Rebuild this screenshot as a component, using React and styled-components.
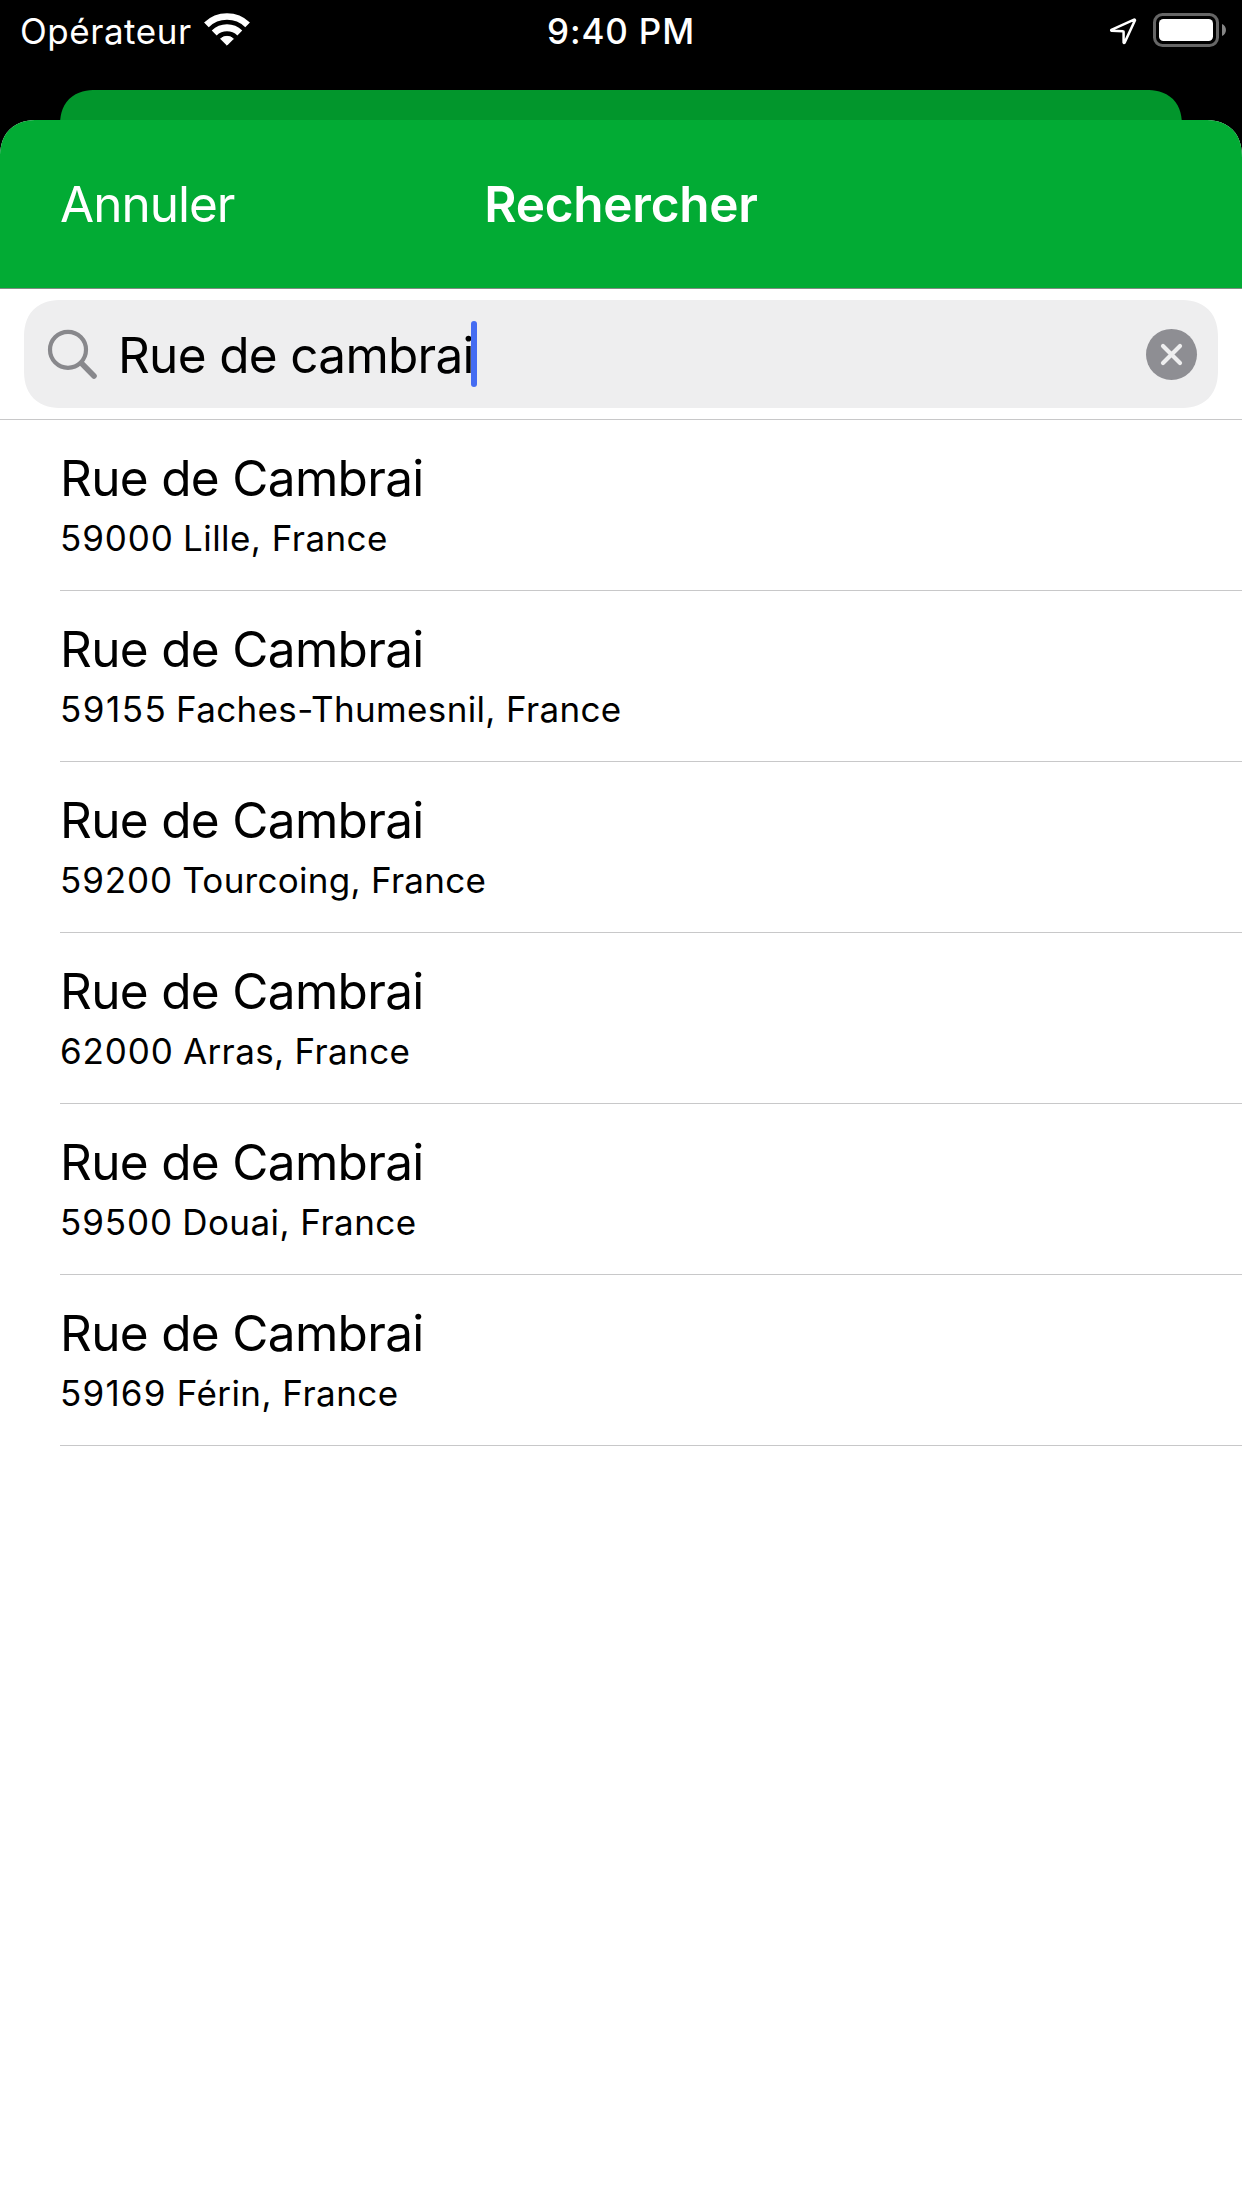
import React from "react";
import styled, { createGlobalStyle } from "styled-components";

const GlobalStyle = createGlobalStyle`
  * { box-sizing: border-box; }
  body {
    margin: 0;
    background: #000;
    color: #000;
    font-family: Inter, "Liberation Sans", sans-serif;
    -webkit-font-smoothing: antialiased;
  }
  button { all: unset; cursor: pointer; }
`;

const Screen = styled.div`
  display: flex;
  flex-direction: column;
  width: 1242px;
  height: 2208px;
  overflow: hidden;
  background: #000;
`;

const StatusBar = styled.header`
  display: grid;
  grid-template-columns: 1fr auto 1fr;
  align-items: center;
  height: 60px;
  margin-bottom: 30px;
  padding: 0 15px;
  color: #fff;
  flex: none;
`;

const StatusGroup = styled.div`
  display: flex;
  align-items: center;
  justify-content: ${(p) => (p.$end ? "flex-end" : "flex-start")};
  gap: ${(p) => p.$gap}px;
`;

const Carrier = styled.span`
  padding: 2px 0 0 5px;
  font-size: 35px;
  line-height: 42px;
  letter-spacing: 0.53px;
`;

const Clock = styled.time`
  padding-top: 2px;
  font-size: 35px;
  line-height: 42px;
  font-weight: 550;
  letter-spacing: 0.85px;
`;

const BackCard = styled.div`
  flex: none;
  height: 68px;
  margin: 0 60px -38px;
  border-radius: 36px 36px 0 0;
  corner-shape: superellipse(1.25);
  background: #02962c;
`;

const Sheet = styled.main`
  display: flex;
  flex-direction: column;
  flex: 1;
  overflow: hidden;
  border-radius: 38px 38px 0 0;
  corner-shape: superellipse(1.25);
  background: #fff;
  z-index: 1;
`;

const NavBar = styled.nav`
  display: grid;
  grid-template-columns: 1fr auto 1fr;
  align-items: center;
  flex: none;
  height: 169px;
  padding: 0 60px;
  border-bottom: 1px solid #7f8c82;
  background: #02ab34;
  color: #fff;
  font-size: 49.5px;
  line-height: 60px;
`;

const CancelButton = styled.button`
  letter-spacing: -1px;
`;

const NavTitle = styled.h1`
  margin: 0;
  font: inherit;
  font-weight: 600;
  letter-spacing: -0.25px;
`;

const SearchBar = styled.div`
  flex: none;
  padding: 11px 24px;
  border-bottom: 1px solid #c8c8c9;
`;

const SearchField = styled.div`
  display: flex;
  align-items: center;
  height: 108px;
  padding: 0 20px 0 22px;
  border-radius: 38px;
  corner-shape: superellipse(1.25);
  background: #eeeeef;
`;

const Query = styled.span`
  margin-left: 18px;
  padding-top: 2px;
  font-size: 49.5px;
  line-height: 60px;
  letter-spacing: -0.75px;
  word-spacing: 0.3px;
`;

const Caret = styled.span`
  width: 6px;
  height: 66px;
  margin-left: -2.7px;
  border-radius: 3px;
  background: #446cf2;
`;

const ClearButton = styled.button`
  display: flex;
  margin-left: auto;
`;

const Results = styled.ul`
  margin: 0;
  padding: 0 0 0 60px;
  list-style: none;
`;

const Result = styled.li`
  display: flex;
  flex-direction: column;
  gap: 9px;
  height: 171px;
  padding-top: 28px;
  border-bottom: 1px solid #c8c8c9;
`;

const Street = styled.span`
  font-size: 49.5px;
  line-height: 60px;
  letter-spacing: -0.67px;
`;

const Locality = styled.span`
  font-size: 35px;
  line-height: 42px;
  letter-spacing: ${(p) => p.$tracking}px;
  white-space: pre;
`;

const PostalCode = styled.span`
  letter-spacing: ${(p) => p.$tracking}px;
  word-spacing: ${(p) => p.$space}px;
`;

const Icon = styled.svg`
  display: block;
  flex: none;
`;

const WifiIcon = () => (
  <Icon width="46" height="34" viewBox="204 13 46 34" fill="none" stroke="#fff">
    <path d="M206.4 24.8A29.7 29.7 0 0 1 247.6 24.8" strokeWidth="6.7" />
    <path d="M214.2 32.9A18.4 18.4 0 0 1 239.8 32.9" strokeWidth="7" />
    <path
      d="M220.6 38.8A9.6 9.6 0 0 1 233.4 38.8L227 45.2Z"
      fill="#fff"
      strokeWidth="1"
      strokeLinejoin="round"
    />
  </Icon>
);

const LocationIcon = () => (
  <Icon width="28" height="34" viewBox="1109 13 28 34" fill="none" stroke="#fff">
    <path
      d="M1134.1 19.6L1111.4 29.9Q1110.8 30.5 1111.7 30.8L1123 31.2Q1123.6 31.2 1123.6 31.8L1123.6 42.4Q1123.9 43.4 1124.6 42.6L1135 20.3Q1135 19.3 1134.1 19.6Z"
      strokeWidth="2.5"
      strokeLinejoin="round"
    />
  </Icon>
);

const BatteryIcon = () => (
  <Icon width="74" height="34" viewBox="1153 13 74 34" fill="none">
    <rect x="1154.5" y="14.5" width="63" height="31" rx="8" stroke="#666" strokeWidth="3" />
    <rect x="1159" y="19" width="54" height="22" rx="4.5" fill="#fff" />
    <path d="M1222 24C1227.3 26 1227.3 34 1222 36Z" fill="#858585" />
  </Icon>
);

const SearchIcon = () => (
  <Icon width="54" height="54" viewBox="46 327 54 54" fill="none" stroke="#88888c">
    <circle cx="68" cy="349.8" r="18" strokeWidth="4.2" />
    <path d="M81.5 363.3L94 376" strokeWidth="5.6" strokeLinecap="round" />
  </Icon>
);

const ClearIcon = () => (
  <Icon width="52" height="52" viewBox="0 0 52 52" fill="none">
    <circle cx="25.5" cy="26.4" r="25.5" fill="#8e8e93" />
    <path
      d="M17 17.9L34 34.9M34 17.9L17 34.9"
      stroke="#eeeeef"
      strokeWidth="4.2"
      strokeLinecap="round"
    />
  </Icon>
);

const results = [
  { code: "59000", place: "Lille, France", codeTracking: 0.9, space: -1.5, tracking: 0.45 },
  { code: "59155", place: "Faches-Thumesnil, France", codeTracking: 1.5, space: -2.6, tracking: 0.35 },
  { code: "59200", place: "Tourcoing, France", codeTracking: 0.9, space: -1.5, tracking: 0.28 },
  { code: "62000", place: "Arras, France", codeTracking: 0.9, space: -1.5, tracking: 0.35 },
  { code: "59500", place: "Douai, France", codeTracking: 0.9, space: -1.5, tracking: 0.45 },
  { code: "59169", place: "Férin, France", codeTracking: 1.2, space: -1, tracking: 0.45 },
];

export default function App() {
  return (
    <>
      <GlobalStyle />
      <Screen>
        <StatusBar>
          <StatusGroup $gap={12.4}>
            <Carrier>Opérateur</Carrier>
            <WifiIcon />
          </StatusGroup>
          <Clock>9:40 PM</Clock>
          <StatusGroup $end $gap={16}>
            <LocationIcon />
            <BatteryIcon />
          </StatusGroup>
        </StatusBar>
        <BackCard />
        <Sheet>
          <NavBar>
            <CancelButton>Annuler</CancelButton>
            <NavTitle>Rechercher</NavTitle>
          </NavBar>
          <SearchBar>
            <SearchField>
              <SearchIcon />
              <Query>Rue de cambrai</Query>
              <Caret />
              <ClearButton aria-label="Effacer">
                <ClearIcon />
              </ClearButton>
            </SearchField>
          </SearchBar>
          <Results>
            {results.map((r) => (
              <Result key={r.code}>
                <Street>Rue de Cambrai</Street>
                <Locality $tracking={r.tracking}>
                  <PostalCode $tracking={r.codeTracking} $space={r.space}>
                    {r.code + " "}
                  </PostalCode>
                  {r.place}
                </Locality>
              </Result>
            ))}
          </Results>
        </Sheet>
      </Screen>
    </>
  );
}
